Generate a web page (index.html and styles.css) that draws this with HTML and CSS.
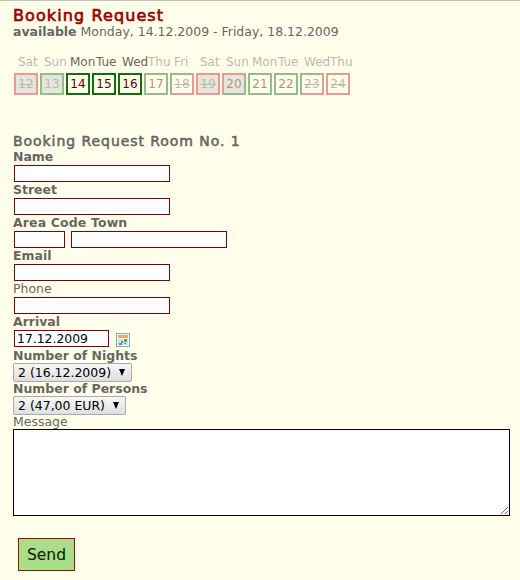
FILE: index.html
```html
<!DOCTYPE html>
<html lang="en">
<head>
<meta charset="utf-8">
<title>Booking Request</title>
<link rel="stylesheet" href="styles.css">
</head>
<body>
<main class="page">
  <h1 class="title">Booking Request</h1>
  <p class="range"><strong>available</strong> Monday, 14.12.2009 - Friday, 18.12.2009</p>
  <div class="calendar">
    <div class="day faded"><span class="dow">Sat</span><span class="date busy weekend taken">12</span></div>
    <div class="day faded"><span class="dow">Sun</span><span class="date free weekend past">13</span></div>
    <div class="day"><span class="dow">Mon</span><span class="date free">14</span></div>
    <div class="day"><span class="dow">Tue</span><span class="date free">15</span></div>
    <div class="day"><span class="dow">Wed</span><span class="date free">16</span></div>
    <div class="day faded"><span class="dow">Thu</span><span class="date free">17</span></div>
    <div class="day faded"><span class="dow">Fri</span><span class="date free-busy taken">18</span></div>
    <div class="day faded"><span class="dow">Sat</span><span class="date busy weekend taken">19</span></div>
    <div class="day faded"><span class="dow">Sun</span><span class="date busy-free weekend">20</span></div>
    <div class="day faded"><span class="dow">Mon</span><span class="date free">21</span></div>
    <div class="day faded"><span class="dow">Tue</span><span class="date free">22</span></div>
    <div class="day faded"><span class="dow">Wed</span><span class="date free-busy taken">23</span></div>
    <div class="day faded"><span class="dow">Thu</span><span class="date busy taken">24</span></div>
  </div>
  <form class="form">
    <h2 class="room">Booking Request Room No. 1</h2>
    <label class="required" for="name">Name</label>
    <div class="row"><input id="name" class="field" type="text"></div>
    <label class="required" for="street">Street</label>
    <div class="row"><input id="street" class="field" type="text"></div>
    <label class="required area" for="town">Area Code Town</label>
    <div class="row"><input class="field code" type="text"><input id="town" class="field" type="text"></div>
    <label class="required" for="email">Email</label>
    <div class="row"><input id="email" class="field" type="text"></div>
    <label for="phone">Phone</label>
    <div class="row"><input id="phone" class="field" type="text"></div>
    <label class="required" for="arrival">Arrival</label>
    <div class="row"><input id="arrival" class="field arrival" type="text" value="17.12.2009">
      <svg class="cal-icon" width="14" height="14" viewBox="0 0 14 14" shape-rendering="crispEdges">
        <rect x=".5" y=".5" width="13" height="13" fill="#f4f8fc" stroke="#7da7d9"/>
        <rect x="2" y="2" width="10" height="3" fill="#f5a45c"/>
        <path d="M2 6h10v6H2z" fill="#d5e0e4"/>
        <path d="M8 6h3v3H8zM5 8h2v2H5zM3 10h3v2H3zM8 10h2v1H8z" fill="#4fa36b"/>
      </svg>
    </div>
    <label class="required low">Number of Nights</label>
    <div class="row"><button type="button" class="select nights">2 (16.12.2009)<svg class="arrow" width="6" height="7" viewBox="0 0 6 7"><path d="M0 0h6L3 7z"/></svg></button></div>
    <label class="required low">Number of Persons</label>
    <div class="row"><button type="button" class="select persons">2 (47,00 EUR)<svg class="arrow" width="6" height="7" viewBox="0 0 6 7"><path d="M0 0h6L3 7z"/></svg></button></div>
    <label class="low" for="message">Message</label>
    <textarea id="message" class="message"></textarea>
    <button type="button" class="send">Send</button>
  </form>
</main>
</body>
</html>
```

FILE: styles.css
```css
* { box-sizing: border-box; }
body {
  margin: 0;
  height: 580px;
  overflow: hidden;
  background: #ffffec;
  border-top: 1px solid #c4c4b6;
  color: #666660;
  font: 12.48px/16px "DejaVu Sans", sans-serif;
}
.page { padding: 6px 10px 0 13px; }
.title { margin: 0; font-size: 16px; font-weight: normal; -webkit-text-stroke: .7px; letter-spacing: 1.1px; line-height: 17px; color: #a00000; }
.range { margin: 0; height: 15px; line-height: 15px; }
.calendar { display: flex; gap: 2px; margin: 15px 0 0 1px; font-size: 12px; }
.day { width: 24px; }
.dow { display: block; height: 18px; line-height: 16px; padding-left: 4px; margin-bottom: 1px; white-space: nowrap; }
.date { display: block; height: 22px; line-height: 18px; border: 2px solid; text-align: center; color: #5a0000; }
.free { border-color: #107010; }
.busy { border-color: #d82020; }
.busy-free { border-color: #d82020 #107010 #107010 #d82020; }
.free-busy { border-color: #107010 #d82020 #d82020 #107010; }
.weekend { background: #c8c8cc; }
.taken, .past { color: #666660; }
.taken { text-decoration: line-through; }
.faded { opacity: .45; }
.form { margin: 37px 0 0; }
.room { margin: 0; padding-top: 1px; height: 17px; font-size: 14px; font-weight: normal; -webkit-text-stroke: .55px; letter-spacing: .94px; line-height: 17px; }
label { display: block; height: 16px; }
.required { font-weight: bold; }
.area { letter-spacing: .15px; }
.low { padding-top: 1px; }
.row { display: flex; height: 17px; }
.field {
  width: 156px; height: 17px; margin: 0 0 0 1px; padding: 0 2px;
  border: 1px solid #800010; background: #fff; color: #000;
  font: 12.4px/15px "DejaVu Sans", sans-serif;
}
.code { width: 51px; margin-right: 5px; }
.arrival { width: 95px; }
.cal-icon { margin: 3px 0 0 7px; flex: none; }
.select {
  display: flex; align-items: center; justify-content: space-between;
  height: 19px; padding: 0 6px 0 4px; border: 1px solid #aaa; border-radius: 2px;
  background: linear-gradient(#f8f8f8, #dedede); color: #000;
  font: 12.48px/16px "DejaVu Sans", sans-serif;
}
.nights { width: 119px; }
.persons { width: 113px; }
.message { display: block; width: 497px; height: 87px; margin: 0; padding: 2px; border: 1px solid #000; background: #fff; }
.send {
  display: block; width: 57px; height: 33px; margin: 22px 0 0 5px; padding: 0;
  border: 1px solid #a01000; background: #aadd88; color: #002000;
  font: 15.5px "DejaVu Sans", sans-serif;
}
```
